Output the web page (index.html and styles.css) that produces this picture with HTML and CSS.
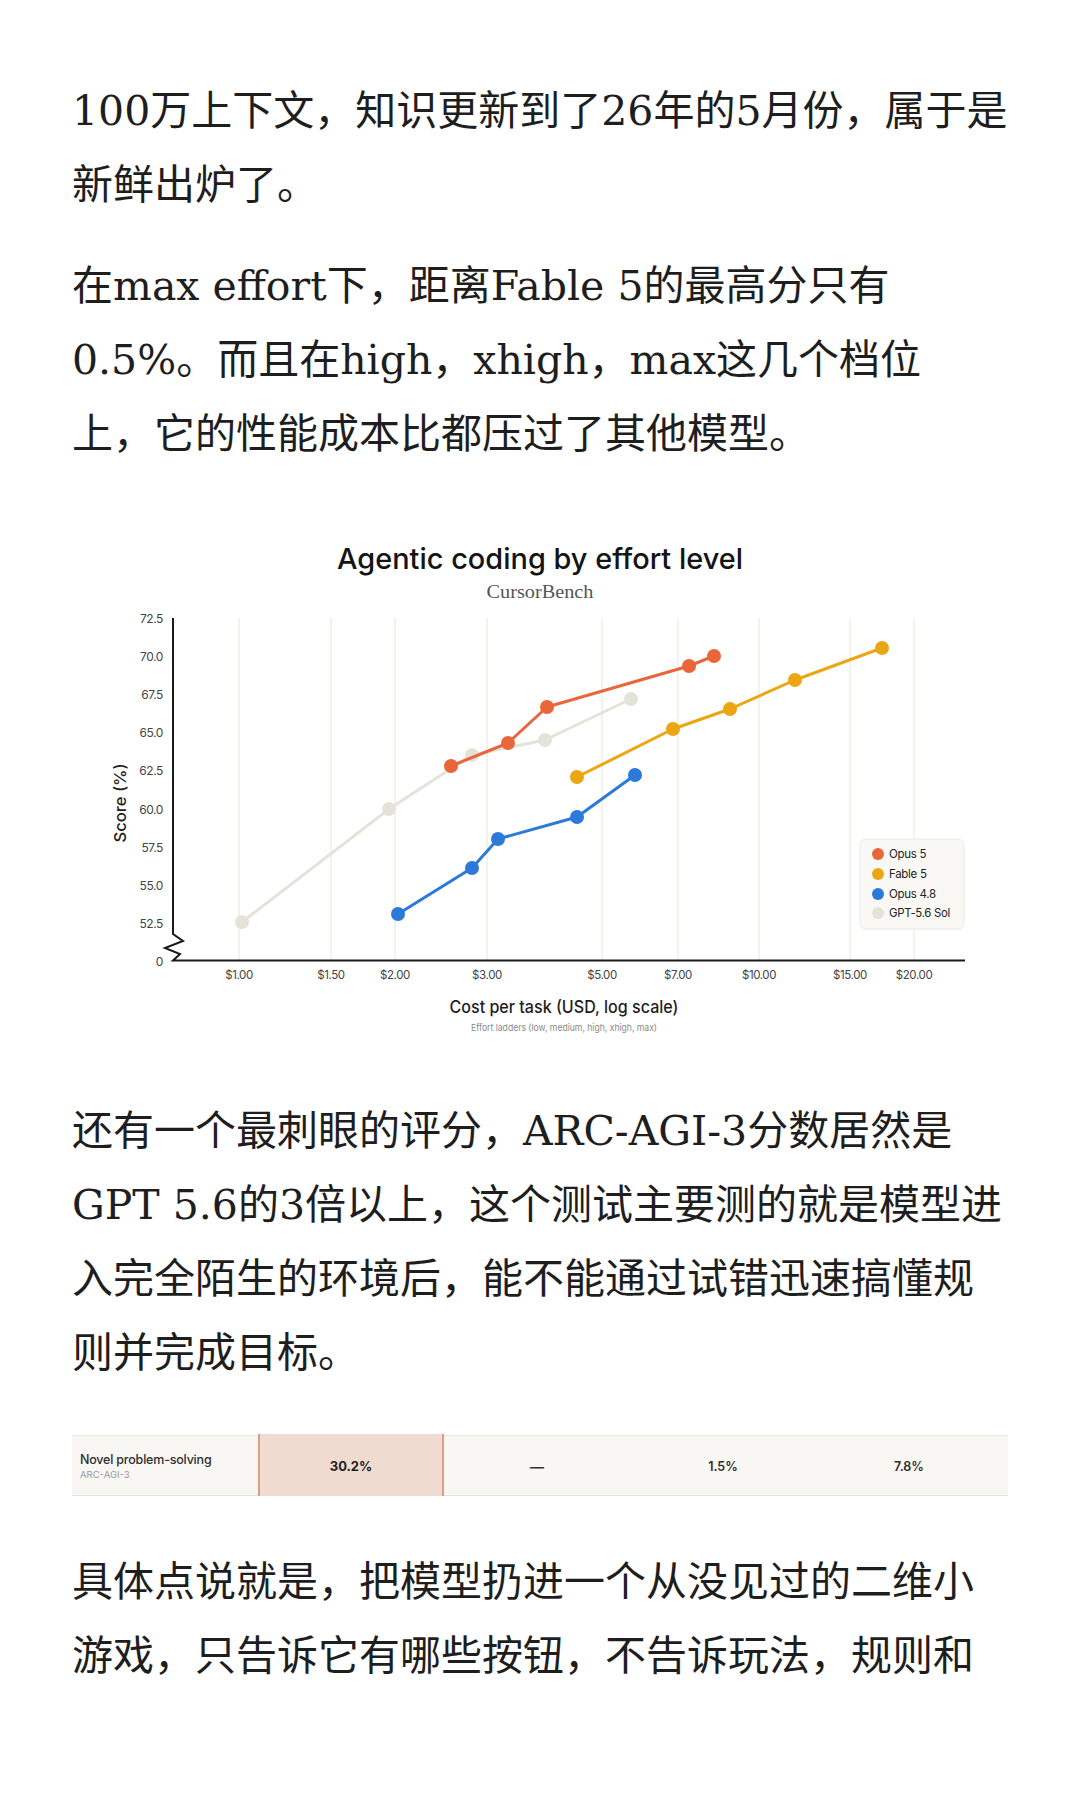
FILE: index.html
```html
<!DOCTYPE html>
<html lang="zh-CN">
<head>
<meta charset="utf-8">
<title>Article</title>
<link rel="stylesheet" href="styles.css">
</head>
<body>
<main class="page">
  <p class="text">100万上下文，知识更新到了26年的5月份，属于是<br>新鲜出炉了。</p>
  <p class="text">在max effort下，距离Fable 5的最高分只有<br>0.5%。而且在high，xhigh，max这几个档位<br>上，它的性能成本比都压过了其他模型。</p>

  <figure class="chart">
    <svg class="chart-svg" width="936" height="569" viewBox="72 498 936 569" xmlns="http://www.w3.org/2000/svg">
      <text class="c-title" x="540" y="568" text-anchor="middle" textLength="406" lengthAdjust="spacingAndGlyphs">Agentic coding by effort level</text>
      <text class="c-sub" x="540" y="597" text-anchor="middle" textLength="107" lengthAdjust="spacingAndGlyphs">CursorBench</text>

      <g class="grid">
        <line x1="239" y1="617" x2="239" y2="959"/>
        <line x1="331" y1="617" x2="331" y2="959"/>
        <line x1="395" y1="617" x2="395" y2="959"/>
        <line x1="487" y1="617" x2="487" y2="959"/>
        <line x1="602" y1="617" x2="602" y2="959"/>
        <line x1="678" y1="617" x2="678" y2="959"/>
        <line x1="759" y1="617" x2="759" y2="959"/>
        <line x1="850" y1="617" x2="850" y2="959"/>
        <line x1="914" y1="617" x2="914" y2="959"/>
      </g>

      <path class="axis" d="M173 617 V933 L183 940 L165 947 L180 953 L173 959.5 H965"/>

      <g class="ytick">
        <text x="163" y="617">72.5</text>
        <text x="163" y="655">70.0</text>
        <text x="163" y="693">67.5</text>
        <text x="163" y="731">65.0</text>
        <text x="163" y="769">62.5</text>
        <text x="163" y="808">60.0</text>
        <text x="163" y="846">57.5</text>
        <text x="163" y="884">55.0</text>
        <text x="163" y="922">52.5</text>
        <text x="163" y="960">0</text>
      </g>

      <g class="xtick">
        <text x="239" y="974">$1.00</text>
        <text x="331" y="974">$1.50</text>
        <text x="395" y="974">$2.00</text>
        <text x="487" y="974">$3.00</text>
        <text x="602" y="974">$5.00</text>
        <text x="678" y="974">$7.00</text>
        <text x="759" y="974">$10.00</text>
        <text x="850" y="974">$15.00</text>
        <text x="914" y="974">$20.00</text>
      </g>

      <text class="c-ylabel" x="0" y="0" transform="translate(120 802) rotate(-90)" text-anchor="middle" textLength="79" lengthAdjust="spacingAndGlyphs">Score (%)</text>
      <text class="c-xlabel" x="564" y="1006" text-anchor="middle" textLength="229" lengthAdjust="spacingAndGlyphs">Cost per task (USD, log scale)</text>
      <text class="c-note" x="564" y="1026" text-anchor="middle" textLength="186" lengthAdjust="spacingAndGlyphs">Effort ladders (low, medium, high, xhigh, max)</text>

      <g class="series s-gray">
        <polyline points="242,921 389,808 472,754 545,739 631,698"/>
        <circle cx="242" cy="921" r="7"/><circle cx="389" cy="808" r="7"/><circle cx="472" cy="754" r="7"/><circle cx="545" cy="739" r="7"/><circle cx="631" cy="698" r="7"/>
      </g>
      <g class="series s-orange">
        <polyline points="451,765 508,742 547,706 689,665 714,655"/>
        <circle cx="451" cy="765" r="7"/><circle cx="508" cy="742" r="7"/><circle cx="547" cy="706" r="7"/><circle cx="689" cy="665" r="7"/><circle cx="714" cy="655" r="7"/>
      </g>
      <g class="series s-blue">
        <polyline points="398,913 472,867 498,838 577,816 635,774"/>
        <circle cx="398" cy="913" r="7"/><circle cx="472" cy="867" r="7"/><circle cx="498" cy="838" r="7"/><circle cx="577" cy="816" r="7"/><circle cx="635" cy="774" r="7"/>
      </g>
      <g class="series s-yellow">
        <polyline points="577,776 673,728 730,708 795,679 882,647"/>
        <circle cx="577" cy="776" r="7"/><circle cx="673" cy="728" r="7"/><circle cx="730" cy="708" r="7"/><circle cx="795" cy="679" r="7"/><circle cx="882" cy="647" r="7"/>
      </g>

      <g class="legend">
        <rect x="860" y="838" width="104" height="90" rx="6"/>
        <circle class="d-orange" cx="878" cy="853" r="6"/>
        <text x="889" y="853">Opus 5</text>
        <circle class="d-yellow" cx="878" cy="873" r="6"/>
        <text x="889" y="873">Fable 5</text>
        <circle class="d-blue" cx="878" cy="893" r="6"/>
        <text x="889" y="893">Opus 4.8</text>
        <circle class="d-gray" cx="878" cy="912" r="6"/>
        <text x="889" y="912" textLength="61" lengthAdjust="spacingAndGlyphs">GPT-5.6 Sol</text>
      </g>
    </svg>
  </figure>

  <p class="text">还有一个最刺眼的评分，ARC-AGI-3分数居然是<br>GPT 5.6的3倍以上，这个测试主要测的就是模型进<br>入完全陌生的环境后，能不能通过试错迅速搞懂规<br>则并完成目标。</p>

  <div class="score-row">
    <div class="cell label-cell">
      <span class="row-title">Novel problem-solving</span>
      <span class="row-sub">ARC-AGI-3</span>
    </div>
    <div class="cell value highlight">30.2%</div>
    <div class="cell value dash">—</div>
    <div class="cell value">1.5%</div>
    <div class="cell value">7.8%</div>
  </div>

  <p class="text">具体点说就是，把模型扔进一个从没见过的二维小<br>游戏，只告诉它有哪些按钮，不告诉玩法，规则和</p>
</main>
</body>
</html>
```

FILE: styles.css
```css
html, body {
  margin: 0;
  padding: 0;
  background: #ffffff;
}

.page {
  width: 936px;
  padding: 75px 72px 0 72px;
}

.text {
  margin: 0 0 27.4px 0;
  font-family: "DejaVu Serif", "Noto Sans CJK SC", serif;
  font-size: 41px;
  line-height: 73.8px;
  color: #1e1e1e;
  white-space: nowrap;
}

.chart {
  margin: 0 0 27.4px 0;
  height: 569px;
}

.chart-svg {
  display: block;
  font-family: "Inter", "Lato", sans-serif;
}

.c-title {
  font-size: 29px;
  font-weight: 500;
  fill: #141414;
}

.c-sub {
  font-family: "Liberation Serif", serif;
  font-size: 19px;
  fill: #555555;
}

.grid line {
  stroke: #efeee7;
  stroke-width: 1.5;
}

.axis {
  fill: none;
  stroke: #1a1a1a;
  stroke-width: 2;
  stroke-linejoin: miter;
}

.ytick text {
  font-size: 12px;
  fill: #444444;
  text-anchor: end;
  dominant-baseline: central;
  letter-spacing: -0.4px;
}

.xtick text {
  font-size: 11.5px;
  fill: #444444;
  text-anchor: middle;
  dominant-baseline: central;
  letter-spacing: -0.4px;
}

.c-ylabel {
  font-size: 16px;
  font-weight: 500;
  fill: #222222;
  dominant-baseline: central;
}

.c-xlabel {
  font-size: 17px;
  font-weight: 500;
  fill: #1e1e1e;
  dominant-baseline: central;
}

.c-note {
  font-size: 9.5px;
  fill: #8a8a8a;
  dominant-baseline: central;
}

.series polyline {
  fill: none;
  stroke-width: 3;
  stroke-linejoin: round;
  stroke-linecap: round;
}

.s-gray polyline { stroke: #e4e3da; }
.s-gray circle { fill: #e4e3da; }
.s-orange polyline { stroke: #e8663a; }
.s-orange circle { fill: #e8663a; }
.s-blue polyline { stroke: #2b79d8; }
.s-blue circle { fill: #2b79d8; }
.s-yellow polyline { stroke: #eba713; }
.s-yellow circle { fill: #eba713; }

.legend rect {
  fill: #f9f8f5;
  stroke: #eae8e2;
  stroke-width: 1;
}

.legend text {
  font-size: 11.5px;
  fill: #222222;
  dominant-baseline: central;
  letter-spacing: -0.3px;
}

.d-orange { fill: #e8663a; }
.d-yellow { fill: #eba713; }
.d-blue { fill: #2b79d8; }
.d-gray { fill: #e4e3da; }

.score-row {
  display: grid;
  grid-template-columns: repeat(5, 186px);
  height: 61px;
  margin: 45px 0 50px 0;
  background: #f8f7f4;
  border-top: 1px solid #eae8e3;
  border-bottom: 1px solid #e4e2dd;
  box-sizing: border-box;
  font-family: "Inter", "Lato", sans-serif;
}

.cell {
  display: flex;
  align-items: center;
  justify-content: center;
}

.label-cell {
  flex-direction: column;
  align-items: flex-start;
  justify-content: center;
  padding-left: 8px;
  gap: 2px;
}

.row-title {
  font-size: 12.5px;
  font-weight: 500;
  color: #2e2e2e;
  letter-spacing: -0.2px;
}

.row-sub {
  font-size: 9.5px;
  color: #9a9a9a;
}

.value {
  font-size: 12.5px;
  font-weight: 600;
  color: #2e2e2e;
  padding-top: 2px;
}

.highlight {
  background: #f0dbd1;
  border-left: 2px solid #de9c88;
  border-right: 2px solid #de9c88;
  margin-top: -2px;
  margin-bottom: -1px;
  font-weight: 700;
  color: #1e1e1e;
  font-size: 13px;
}

.dash {
  font-weight: 600;
  color: #333333;
  font-size: 14px;
}
```
